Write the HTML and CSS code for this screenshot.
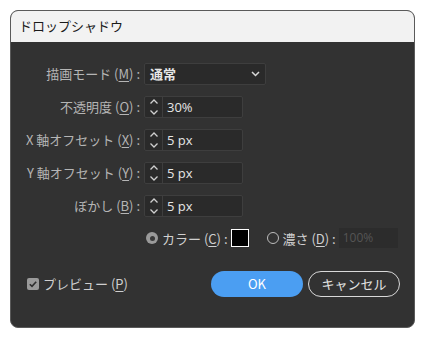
FILE: index.html
```html
<!DOCTYPE html>
<html lang="ja">
<head>
<meta charset="utf-8">
<link rel="stylesheet" href="styles.css">
</head>
<body>
<div class="win">
  <div class="titlebar">ドロップシャドウ</div>
  <div class="content">
    <div class="form">
      <div class="row">
        <label class="lbl">描画モード (<u>M</u>) :</label>
        <div class="select"><span>通常</span>
          <svg class="chev" width="9" height="6" viewBox="0 0 9 6"><path d="M1 1 L4.5 4.5 L8 1" fill="none" stroke="#d8d8d8" stroke-width="1.5"/></svg>
        </div>
      </div>
      <div class="row">
        <label class="lbl">不透明度 (<u>O</u>) :</label>
        <div class="spin"><span class="arrows"><svg width="10" height="18" viewBox="0 0 10 18"><path d="M1.5 5.5 L5 2 L8.5 5.5 M1.5 12.5 L5 16 L8.5 12.5" fill="none" stroke="#cfcfcf" stroke-width="1.3"/></svg></span><span class="val">30%</span></div>
      </div>
      <div class="row">
        <label class="lbl">X 軸オフセット (<u>X</u>) :</label>
        <div class="spin"><span class="arrows"><svg width="10" height="18" viewBox="0 0 10 18"><path d="M1.5 5.5 L5 2 L8.5 5.5 M1.5 12.5 L5 16 L8.5 12.5" fill="none" stroke="#cfcfcf" stroke-width="1.3"/></svg></span><span class="val">5 px</span></div>
      </div>
      <div class="row">
        <label class="lbl">Y 軸オフセット (<u>Y</u>) :</label>
        <div class="spin"><span class="arrows"><svg width="10" height="18" viewBox="0 0 10 18"><path d="M1.5 5.5 L5 2 L8.5 5.5 M1.5 12.5 L5 16 L8.5 12.5" fill="none" stroke="#cfcfcf" stroke-width="1.3"/></svg></span><span class="val">5 px</span></div>
      </div>
      <div class="row">
        <label class="lbl">ぼかし (<u>B</u>) :</label>
        <div class="spin"><span class="arrows"><svg width="10" height="18" viewBox="0 0 10 18"><path d="M1.5 5.5 L5 2 L8.5 5.5 M1.5 12.5 L5 16 L8.5 12.5" fill="none" stroke="#cfcfcf" stroke-width="1.3"/></svg></span><span class="val">5 px</span></div>
      </div>
    </div>
    <div class="colorrow">
      <span class="radio on"></span>
      <span class="rlbl">カラー (<u>C</u>) :</span>
      <span class="swatch"></span>
      <span class="radio"></span>
      <span class="rlbl">濃さ (<u>D</u>) :</span>
      <span class="disabled">100%</span>
    </div>
    <div class="footer">
      <div class="preview">
        <span class="check"><svg width="12" height="12" viewBox="0 0 12 12"><path d="M2.8 6.2 L5 8.4 L9.2 3.8" fill="none" stroke="#2e2e2e" stroke-width="1.6"/></svg></span>
        <span>プレビュー (<u>P</u>)</span>
      </div>
      <div class="buttons">
        <button class="btn ok">OK</button>
        <button class="btn cancel">キャンセル</button>
      </div>
    </div>
  </div>
</div>
</body>
</html>
```

FILE: styles.css
```css
* { box-sizing: border-box; }
html, body { margin: 0; padding: 0; background: #ffffff; }
body {
  font-family: "Noto Sans CJK JP", "Noto Sans", sans-serif;
  font-size: 13px;
  padding: 10px 11px 11px 10px;
}
.win {
  width: 405px;
  height: 318px;
  border: 1px solid #5a5a5a;
  border-radius: 8px;
  overflow: hidden;
  background: #323232;
  display: flex;
  flex-direction: column;
}
.titlebar {
  height: 31px;
  background: #f2f2f2;
  color: #1a1a1a;
  font-size: 13px;
  line-height: 30px;
  padding-left: 8px;
  flex: none;
}
.content {
  flex: 1;
  display: flex;
  flex-direction: column;
  padding-top: 21px;
}
.form {
  display: flex;
  flex-direction: column;
  gap: 11px;
}
.row {
  display: flex;
  align-items: center;
  height: 22px;
}
.lbl {
  width: 131px;
  text-align: right;
  color: #b5b5b5;
  padding-right: 2px;
  white-space: nowrap;
  line-height: 22px;
}
u { text-underline-offset: 2px; }
.select {
  margin-left: 2px;
  width: 122px;
  height: 22px;
  background: #2a2a2a;
  border: 1px solid #3e3e3e;
  border-radius: 2px;
  display: flex;
  align-items: center;
  justify-content: space-between;
  padding: 0 5px 0 5px;
  color: #e6e6e6;
  font-weight: 700;
}
.select span { line-height: 20px; }
.spin {
  margin-left: 2px;
  width: 99px;
  height: 22px;
  background: #2a2a2a;
  border: 1px solid #3e3e3e;
  border-radius: 2px;
  display: flex;
  align-items: center;
}
.arrows {
  width: 18px;
  height: 20px;
  border-right: 1px solid #3e3e3e;
  display: flex;
  align-items: center;
  justify-content: center;
}
.val {
  padding-left: 4px;
  color: #e6e6e6;
  font-family: "Open Sans", "Noto Sans", sans-serif;
  font-size: 13px;
}
.colorrow {
  display: flex;
  align-items: center;
  height: 20px;
  margin-top: 11px;
  padding-left: 135px;
  color: #d0d0d0;
}
.radio {
  width: 12px;
  height: 12px;
  border-radius: 50%;
  border: 1.5px solid #bdbdbd;
  flex: none;
}
.radio.on {
  background: #9a9a9a;
  border: none;
  display: flex;
  align-items: center;
  justify-content: center;
}
.radio.on::after {
  content: "";
  width: 5px;
  height: 5px;
  border-radius: 50%;
  background: #3a3a3a;
}
.rlbl { margin-left: 4px; white-space: nowrap; }
.swatch {
  margin-left: 3px;
  width: 18px;
  height: 18px;
  background: #000;
  border: 1.5px solid #ffffff;
  margin-right: 18px;
}
.disabled {
  margin-left: 3px;
  width: 59px;
  height: 20px;
  background: #2c2c2c;
  color: #555555;
  font-family: "Open Sans", "Noto Sans", sans-serif;
  font-size: 12px;
  line-height: 20px;
  padding-left: 4px;
}
.footer {
  display: flex;
  align-items: center;
  justify-content: space-between;
  margin-top: 22px;
  padding: 0 14px 0 16px;
  height: 27px;
}
.preview {
  display: flex;
  align-items: center;
  gap: 4px;
  color: #cfcfcf;
}
.check {
  width: 12px;
  height: 12px;
  background: #9a9a9a;
  border-radius: 2px;
  display: flex;
}
.buttons { display: flex; gap: 5px; }
.btn {
  width: 92px;
  height: 26px;
  border-radius: 13px;
  font-family: "Noto Sans CJK JP", "Noto Sans", sans-serif;
  font-size: 13px;
  padding: 0;
}
.ok {
  background: #4b9ef2;
  border: none;
  color: #ffffff;
}
.cancel {
  background: transparent;
  border: 1.5px solid #d8d8d8;
  color: #e2e2e2;
}
```
